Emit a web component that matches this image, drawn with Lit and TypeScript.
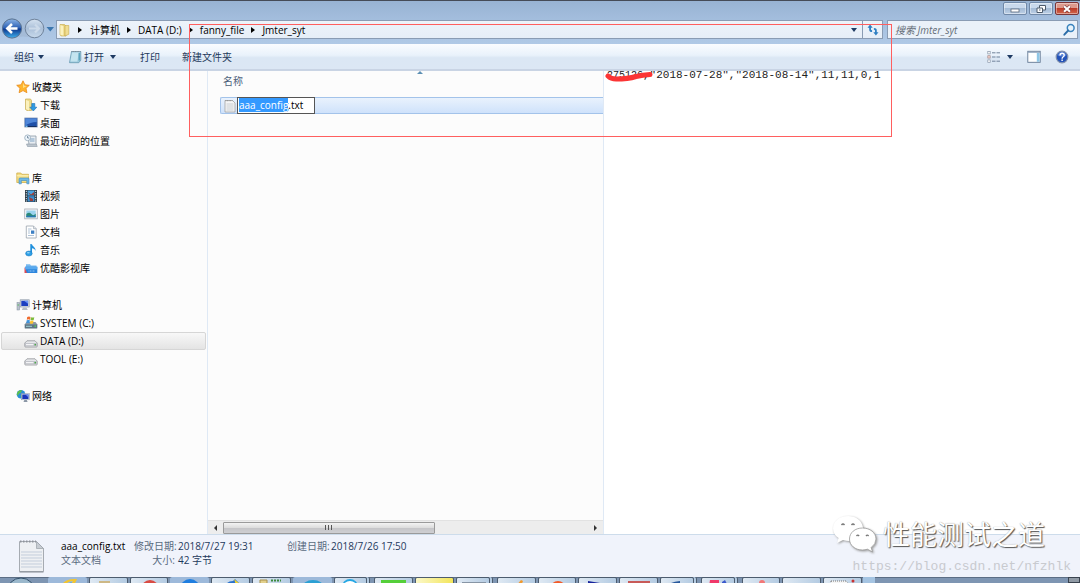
import { LitElement, html, css, svg, nothing } from "lit";
import { customElement, query } from "lit/decorators.js";
import { classMap } from "lit/directives/class-map.js";

const glyphs: Record<string, unknown> = {
  star: svg`<path d="M7 .8l1.9 4 4.4.5-3.3 3 .9 4.4L7 10.6l-3.900 2.100.900-4.400-3.300-3 4.400-.5z" fill="#ffb52e" stroke="#e88a1a" stroke-width=".8"/><path d="M7 2.800l1.200 2.900 2.600.3L7 8z" fill="#ffe08a"/>`,
  download: svg`<path d="M1.500 1h5l1 1.500v10H3l-1.500-1z" fill="#ecd98a" stroke="#c9ae55" stroke-width=".7"/><path d="M2 2l3 1.300v9.200L2 11z" fill="#fbf1bd"/><path d="M7.800 5.500h3v3.700h2L9.300 13 5.800 9.200h2z" fill="#2f9be4" stroke="#1b6fb5" stroke-width=".6"/>`,
  desktop: svg`<rect x=".8" y="2" width="12.400" height="9" fill="#1f50a8" stroke="#7f93b5" stroke-width=".8"/><path d="M1.300 2.500h11.400v3.500C8 6 5 7.500 1.300 9.500z" fill="#4f86d8"/><path d="M1.300 10.500h11.400" stroke="#16305f"/><rect x="1.500" y="9.600" width="2" height="1.300" fill="#7fd0ff"/>`,
  recent: svg`<path d="M4 2h8v8.500H5z" fill="#e8edf2" stroke="#8c99a6" stroke-width=".8"/><path d="M6 5h4.500M6 7h4.500" stroke="#7fa3c4"/><path d="M2.500 10h9.800l.9 2.500H3.500z" fill="#bcc5cd" stroke="#8c99a6" stroke-width=".6"/><circle cx="3.600" cy="3.800" r="2.900" fill="#eef6fc" stroke="#93a7b8" stroke-width=".8"/><path d="M3.600 2v2h1.500" stroke="#47647f" stroke-width=".7" fill="none"/>`,
  library: svg`<path d="M.8 2h4l1 1.300h6.700v8.200H.8z" fill="#f3dd83" stroke="#cfae4b" stroke-width=".8"/><path d="M.8 4.800h12" stroke="#fff4bd"/><path d="M3 12.800V8q0-1 1-1h8q1 0 1 1v4.800h-2.200V9.500H5.300v3.300z" fill="#6fb9e6" stroke="#3d88be" stroke-width=".6"/>`,
  video: svg`<rect x="1" y="1" width="12" height="12" fill="#2c3a44"/><rect x="3.600" y="1.500" width="6.800" height="5" fill="#4aa3df"/><rect x="3.600" y="7.200" width="6.800" height="5.300" fill="#3a8ed0"/><path d="M4 3l3 2.500L10 3v3H6zM5 8l4 2v2H6z" fill="#9b3f3a"/><path d="M2.300 1.800v11M11.700 1.800v11" stroke="#dfe8ee" stroke-dasharray="1.200 1.200"/>`,
  picture: svg`<rect x=".7" y="2" width="12.600" height="9.800" fill="#f5f6f8" stroke="#a7adb5" stroke-width=".8"/><rect x="2.300" y="3.500" width="9.400" height="6.700" fill="#9bd3ee"/><path d="M2.300 7q3-2.500 5 0t4.400-.5v3.700H2.300z" fill="#2c8a78"/><path d="M2.300 8.800h9.400v1.400H2.300z" fill="#2777b5"/>`,
  document: svg`<path d="M2.300 1h7.200l2.700 2.700V13H2.300z" fill="#fff" stroke="#9aa3ad" stroke-width=".8"/><path d="M9.500 1v2.700h2.700" fill="#dde3e9" stroke="#9aa3ad" stroke-width=".6"/><path d="M4 4h3.500M4 6h2M4 8h2M4 10.500h6" stroke="#9bb3cb" stroke-width=".8"/><rect x="7" y="5.500" width="3.300" height="3.300" fill="#3c7fc4"/>`,
  music: svg`<path d="M6.300 10.500V1l1.700.2c.4 2.300 3.800 2.800 3.600 6.800-.7-2-2-2.500-3.600-2.700v5.400z" fill="#1f8fdc"/><ellipse cx="4.900" cy="10.500" rx="3.300" ry="2.500" fill="#2c9fe6" stroke="#1673b8" stroke-width=".5"/><ellipse cx="4.300" cy="9.800" rx="1.500" ry=".8" fill="#93d4f8"/>`,
  youku: svg`<path d="M2 3.200h4l1 1.200h5.500v3H2z" fill="#78b9ee"/><path d="M1 5.800h12.300V12H2z" fill="#2d86dd"/><path d="M1 5.800h12.300v2.500H1z" fill="#58a9ef"/><path d="M.5 6v6H3z" fill="#d84a56"/><path d="M4.500 10h6.500" stroke="#a9d4fa" stroke-width=".8" stroke-dasharray="1 .5"/>`,
  computer: svg`<rect x="1" y="4.500" width="2.600" height="7.500" fill="#b9c2cc" stroke="#8290a0" stroke-width=".5"/><path d="M1.600 7h1.300" stroke="#49b84c"/><rect x="4.200" y="1.800" width="9" height="7.200" fill="#dce2e8" stroke="#8c98a6" stroke-width=".7"/><rect x="5.300" y="2.800" width="6.800" height="5.200" fill="#1c3fc0"/><path d="M8 2.800h4.100v3z" fill="#6a94f5"/><path d="M7 9.500h3.500l1.300 2.500H5.800z" fill="#b6bec7"/>`,
  system: svg`<path d="M.8 8.300L2.500 6h9l1.700 2.300V12H.8z" fill="#8b99a5"/><path d="M.8 8.500h12.400V12.500H.8z" fill="#5d7483"/><path d="M2 10.300h6" stroke="#9fd0d6"/><rect x="10.500" y="9.500" width="1.500" height="1.300" fill="#58e04e"/><path d="M3.200 1q1.800-1 3.300 0L6 3.700q-1.600-.8-3.200 0z" fill="#ef6a2d"/><path d="M7 1.200q1.700.8 3.300 0L9.700 4q-1.600.8-3.200 0z" fill="#7dbb3a"/><path d="M2.700 4.300q1.600-.8 3.200 0l-.5 3q-1.500-.8-3.200 0z" fill="#3f94dc"/><path d="M6.400 4.600q1.600.8 3.200 0L9 7.500q-1.600.7-3.100 0z" fill="#fdc22f"/>`,
  drive: svg`<path d="M.8 9L3 6.800h8L13.200 9v3.300q0 .7-.8.7H1.600q-.8 0-.8-.7z" fill="#e6e7ea" stroke="#85888e" stroke-width=".7"/><path d="M1.200 9.200h11.600V12H1.200z" fill="#b9bcc3"/><path d="M2 10h7.500v1.300H2z" fill="#f3f3f5"/><rect x="10.600" y="9.900" width="1.300" height="1.500" fill="#3fa83a"/>`,
  network: svg`<circle cx="5" cy="5.200" r="4.300" fill="#2a8fd6"/><path d="M2 2.300q2-1.600 4-1L5 3.500 3 4.800 1.500 7Q.3 4.500 2 2.300zM5 6l2.500-1 .5 2.500L5 9z" fill="#5fc04c"/><rect x="5.500" y="4.700" width="7.800" height="6.100" fill="#dbe2ea" stroke="#8794a5" stroke-width=".5"/><rect x="6.300" y="5.500" width="6.200" height="4.500" fill="#1b35b9"/><path d="M9.500 5.500h3v3z" fill="#6c8ff0"/><path d="M8.300 11h2.500l.8 2H7.500z" fill="#8b97a6"/>`,
  folder: svg`<path d="M2 1.500h4.500L8 3v10H3.500L2 12z" fill="#e6cf76" stroke="#c8aa4c" stroke-width=".6"/><path d="M7 2.500h3.800v8.800L7 13z" fill="#f0dd92" stroke="#c8aa4c" stroke-width=".6"/><path d="M2.300 2l3.200 1v9.800l-3.200-1z" fill="#fbf2bf"/>`,
  notepad: svg`<path d="M3.500 1.500h9.300v8.700l-2 2.500H1.500z" fill="#9cc9dc" stroke="#5f93ac" stroke-width=".7"/><path d="M4 2.500h6.800l-1.500 9H2.400z" fill="#c4e4ef"/><path d="M3.500 1.500h9" stroke="#7d8790" stroke-dasharray="1 .7"/><path d="M11.200 3v7.500" stroke="#3c93ae"/>`,
  text: svg`<path d="M2 1.500h7.500L12 4v9H2z" fill="#f5f5f5" stroke="#a2a2a2" stroke-width=".8"/><path d="M3.500 5h7M3.500 7h7M3.500 9h7M3.500 11h7" stroke="#bfc5ca" stroke-width=".8"/><path d="M2.500 1.700h7" stroke="#888" stroke-dasharray=".8 .8"/>`,
  views: svg`<rect x=".8" y="1.500" width="2.400" height="2.400" fill="#fff" stroke="#8996a8" stroke-width=".7"/><rect x=".8" y="5.700" width="2.400" height="2.400" fill="#f3d0c8" stroke="#a58e90" stroke-width=".7"/><rect x=".8" y="9.900" width="2.400" height="2.400" fill="#fff" stroke="#8996a8" stroke-width=".7"/><path d="M5 2.800h3.500M9.500 2.800H13M5 7h3.500M9.500 7H13M5 11.200h3.500M9.500 11.200H13" stroke="#71839b" stroke-width="1"/>`,
  pane: svg`<rect x=".8" y="1.300" width="12.400" height="11" fill="#fff" stroke="#617793" stroke-width=".9"/><path d="M1 2.300h12" stroke="#8fa4bd"/><rect x="9.800" y="3" width="2.800" height="8.800" fill="#8fc6e6"/>`,
  help: svg`<circle cx="7" cy="7" r="5.800" fill="#2453b8" stroke="#8090ad" stroke-width="1.200"/><path d="M2.500 5.500a4.700 4.700 0 019 0q-4.500 2-9 0z" fill="#6d97e4" opacity=".7"/><path d="M5 5.500q0-2.200 2.100-2.200T9.200 5.200Q9.200 6.300 8 7 7.100 7.500 7.100 8.700M7.100 9.600v1.500" stroke="#fff" stroke-width="1.400" fill="none"/>`,
  search: svg`<circle cx="8.700" cy="5" r="3.400" fill="#e7f3fb" stroke="#3a83bd" stroke-width="1.500"/><path d="M6.200 7.500L2.300 11.700" stroke="#2c6da8" stroke-width="1.900" stroke-linecap="round"/>`,
  refresh: svg`<path d="M1.500 4.800h5.200L4.100 1.500zM7.300 9.200h5.200L9.900 12.500z" fill="#2f7fc2"/><path d="M4.100 4v2.500q0 1.700 2 1.700M9.900 10V7.500q0-1.700-2-1.700" stroke="#2f7fc2" stroke-width="1.800" fill="none"/>`,
};

const icon = (name: string) =>
  html`<svg class="icon" viewBox="0 0 14 14" aria-hidden="true">${glyphs[name]}</svg>`;

const sections = [
  { head: ["star", "收藏夹"], items: [["download", "下载"], ["desktop", "桌面"], ["recent", "最近访问的位置"]] },
  { head: ["library", "库"], items: [["video", "视频"], ["picture", "图片"], ["document", "文档"], ["music", "音乐"], ["youku", "优酷影视库"]] },
  { head: ["computer", "计算机"], items: [["system", "SYSTEM (C:)"], ["drive", "DATA (D:)"], ["drive", "TOOL (E:)"]] },
  { head: ["network", "网络"], items: [] },
];

const tasks: { kind: string; art: unknown }[] = [
  { kind: "bare", art: svg`<path d="M12 8q4-8 16-7-1 3-4 7h-4q3-3 4-5-6 0-8 5z" fill="#f2c531"/><path d="M18 8q2-4 5-4l-2 4z" fill="#5ba5df"/>` },
  { kind: "", art: svg`<path d="M9 3h11v5H9z" fill="#cdb886"/>` },
  { kind: "", art: svg`<circle cx="19" cy="11" r="9" fill="#d94b43"/>` },
  { kind: "bare", art: svg`<circle cx="19" cy="11" r="10" fill="#1f7ee0"/>` },
  { kind: "", art: svg`<path d="M13 8q2-5 8-5l2-2 4 4v3z" fill="#2c72cc"/><path d="M22 1l6 5-4 1z" fill="#f3d32f"/>` },
  { kind: "", art: svg`<path d="M7 2h7v6H7z" fill="#e2d08c" stroke="#a8904c"/><path d="M18 2.500h10" stroke="#3c8a3c" stroke-width="2" stroke-dasharray="2 1"/>` },
  { kind: "bare", art: svg`<ellipse cx="19" cy="10" rx="11" ry="8" fill="#2ba0d4"/>` },
  { kind: "stack", art: svg`<circle cx="15" cy="9" r="8" fill="#25a7e4"/><path d="M10 6q5-4 10 0" stroke="#fff" stroke-width="2" fill="none"/>` },
  { kind: "", art: svg`<path d="M6 2h25v6H6z" fill="#55cf3a"/>` },
  { kind: "yellow", art: nothing },
  { kind: "stack", art: svg`<path d="M5 4h24v4H5z" fill="#8795a5"/>` },
  { kind: "", art: svg`<path d="M18 8l5-6 2 1-2 5z" fill="#f29a2d"/>` },
  { kind: "", art: svg`<circle cx="19" cy="11" r="8" fill="#f25a28"/>` },
  { kind: "", art: svg`<path d="M9 3l12 2 5 3H9z" fill="#17249c"/>` },
  { kind: "", art: svg`<path d="M8 3h22v5H8z" fill="#c85a58"/>` },
  { kind: "stack", art: svg`<path d="M6 8q3-4 13-5v5z" fill="#29599c"/>` },
  { kind: "stack", art: svg`<path d="M8 2h9v6H7z" fill="#f0386a"/><path d="M20 4l3-2 3 6h-6z" fill="#3b59cc"/>` },
  { kind: "", art: svg`<circle cx="19" cy="5" r="3" fill="#f27777"/>` },
  { kind: "", art: svg`<path d="M7 5h22v3H7z" fill="#93a9c0"/>` },
  { kind: "", art: svg`<path d="M7 3h15l5 5H7z" fill="#f5f5f5" stroke="#777" stroke-dasharray="1 1"/><circle cx="29" cy="3" r="1.500" fill="#c83232"/>` },
];

@customElement("app-root")
export class AppRoot extends LitElement {
  static styles = css`
    :host {
      display: flex;
      flex-direction: column;
      position: relative;
      height: 100vh;
      overflow: hidden;
      background: #b9d0ea;
      color: #000;
      font: 10px/14px "Open Sans", "Noto Sans CJK SC", sans-serif;
    }
    * { box-sizing: border-box; }
    button, input { font: inherit; color: inherit; margin: 0; padding: 0; border: 0; background: none; }
    button { display: flex; align-items: center; white-space: nowrap; }
    a { color: inherit; text-decoration: none; }
    ul { list-style: none; margin: 0; padding: 0; }
    .icon { width: 14px; height: 14px; flex: none; display: block; }

    .frame {
      flex: none;
      border-top: 1px solid #454b57;
      background: linear-gradient(#98b3d3, #a9c3e2 40%, #bdd3ed);
    }
    .caption { display: flex; justify-content: flex-end; gap: 2px; padding: 1px 1px 0; height: 19px; }
    .win {
      width: 24px;
      height: 13px;
      justify-content: center;
      border: 1px solid #7088a7;
      border-radius: 2px;
      background: linear-gradient(#c9d9ec 45%, #a4bbd6 50%, #bdd0e6);
      box-shadow: inset 0 0 0 1px #ffffff66;
    }
    .win.close { background: linear-gradient(#dd9a8d 45%, #bd3c28 50%, #d0674f); border-color: #7b3538; }
    .win svg { width: 12px; height: 10px; }

    .address { display: flex; align-items: center; height: 20px; padding: 0 2px 1px 2px; }
    .travel { display: flex; align-items: center; width: 54px; }
    .travel svg { width: 52px; height: 21px; flex: none; }
    .travel button { display: block; }
    .path {
      flex: 1;
      display: flex;
      align-items: center;
      min-width: 0;
      height: 19px;
      border: 1px solid #8a9cb4;
      background: linear-gradient(#edf3fa, #e6eef8);
    }
    .path .icon { margin: 0 6px 0 1px; }
    .crumbs { display: flex; flex: 1; align-items: center; }
    .crumbs li { display: flex; align-items: center; }
    .crumbs li::before {
      content: "";
      border: 3px solid transparent;
      border-left: 4px solid #000;
      border-right: 0;
      margin-right: 8px;
    }
    .crumbs li + li::before { margin-left: 7px; margin-right: 7px; }
    .down { border: 3px solid transparent; border-top: 4px solid #1e3a62; border-bottom: 0; flex: none; }
    .path .drop { padding: 0 5px; height: 100%; }
    .path .go { width: 20px; height: 100%; border-left: 1px solid #8a9cb4; justify-content: center; }
    .path .go .icon { margin: 0; }
    .search {
      display: flex;
      align-items: center;
      width: 191px;
      height: 19px;
      margin-left: 4px;
      padding: 0 1px 0 7px;
      border: 1px solid #8a9cb4;
      background: #eaf1f9;
    }
    .search input { flex: 1; min-width: 0; outline: none; }
    .search input::placeholder { color: #666e78; font-style: italic; opacity: 1; }

    .tools {
      flex: none;
      display: flex;
      align-items: center;
      height: 27px;
      margin-top: 4px;
      padding: 0 11px 0 14px;
      color: #1e395b;
      background: linear-gradient(#fafcff, #e9f2fb 45%, #dbe7f4 55%, #dce7f4);
      border-bottom: 2px solid #c9d4e4;
    }
    .organize, .open { margin-right: 24px; }
    .organize .down { margin-left: 4px; }
    .open .icon { margin-right: 2px; }
    .open .down { margin-left: 6px; }
    .print { margin-right: 22px; }
    .right { display: flex; align-items: center; gap: 14px; margin-left: auto; }
    .right .down { margin-left: 6px; }

    .main {
      flex: 1;
      min-height: 0;
      display: grid;
      grid-template-columns: 208px minmax(0, 396fr) minmax(0, 476fr);
      background: #fcfcfc;
    }
    .nav { padding: 7px 1px 0; border-right: 1px solid #dfe9f5; overflow: hidden; }
    .section { margin-bottom: 19px; }
    .entry {
      display: flex;
      align-items: center;
      gap: 2px;
      height: 18px;
      padding-left: 22px;
      border: 1px solid transparent;
      border-radius: 2px;
      white-space: nowrap;
    }
    .entry.head { padding-left: 14px; }
    .entry.selected { border-color: #d6d6d6; background: linear-gradient(#f8f8f8, #e4e4e4); }

    .list { display: flex; flex-direction: column; min-width: 0; border-right: 1px solid #dfe9f5; }
    .column { position: relative; height: 26px; padding: 3px 0 0 15px; color: #4c607a; }
    .column button { height: 14px; }
    .sort {
      position: absolute;
      top: 0;
      left: 53%;
      border: 3px solid transparent;
      border-bottom: 3px solid #5c8fb3;
      border-top: 0;
    }
    .file {
      display: flex;
      align-items: center;
      height: 17px;
      margin-left: 12px;
      padding-left: 2px;
      border: 1px solid #a3c3ea;
      border-right: 0;
      border-radius: 2px 0 0 2px;
      background: linear-gradient(#e9f2fd, #cfe2fb);
    }
    .rename {
      width: 78px;
      height: 17px;
      padding: 0 0 1px 1px;
      border: 1px solid #555;
      border-radius: 0;
      background: #fff;
      outline: none;
    }
    .rename::selection { background: #3399ff; color: #fff; }
    .scroll {
      display: flex;
      align-items: center;
      height: 14px;
      margin-top: auto;
      border-top: 1px solid #e2e2e2;
      background: #ededed;
    }
    .scroll button { width: 15px; height: 13px; justify-content: center; flex: none; }
    .scroll .arrow { border: 3px solid transparent; border-right: 3px solid #333; border-left: 0; }
    .scroll .arrow.next { border-right: 0; border-left: 3px solid #333; }
    .track { flex: 1; height: 12px; }
    .thumb {
      width: 58%;
      height: 12px;
      display: flex;
      justify-content: center;
      align-items: center;
      gap: 2px;
      border: 1px solid #9a9a9a;
      border-radius: 1px;
      background: linear-gradient(#f3f3f3, #dedede 45%, #c6c6c9 55%, #cfcfd2);
    }
    .thumb i { width: 1px; height: 5px; background: #555; }

    .preview {
      position: relative;
      min-width: 0;
      overflow: hidden;
      padding-left: 3px;
      background: #fff;
      color: #222;
      font: 11px/8px "Liberation Mono", monospace;
      white-space: nowrap;
    }
    .masked { font-size: 10px; }
    .scribble { position: absolute; left: 1px; top: 0; width: 50px; height: 12px; }

    .details {
      flex: none;
      display: flex;
      height: 43px;
      padding: 4px 17px 0;
      border-top: 1px solid #cddceb;
      background: #f0f3fb;
      color: #5a6b80;
    }
    .details svg { width: 30px; height: 34px; margin-right: 14px; flex: none; }
    .names { width: 73px; white-space: nowrap; }
    .title { color: #000; }
    .facts { display: grid; grid-template-columns: 153px auto; grid-auto-rows: 14px; margin: 0; white-space: nowrap; }
    .pair { display: grid; grid-template-columns: 41px auto; justify-content: start; column-gap: 3px; }
    .pair dt { text-align: right; }
    .pair dd { margin: 0; color: #1e395b; }

    .taskbar {
      flex: none;
      display: flex;
      height: 6px;
      overflow: hidden;
      background: linear-gradient(#5c6e85 1px, #7e95b2 1px);
    }
    .start { width: 47px; flex: none; }
    .start svg { width: 47px; height: 6px; display: block; }
    .apps { flex: 816 0 0; display: grid; grid-template-columns: repeat(20, minmax(0, 1fr)); }
    .apps button {
      display: block;
      height: 10px;
      margin: 0 1px;
      border: 1px solid #4d5c6e;
      border-radius: 2px;
      background: linear-gradient(90deg, #dfe9f3, #b4cbe2);
      overflow: hidden;
    }
    .apps button.bare { border-color: transparent; background: #9db9da; }
    .apps button.stack { margin-right: 6px; box-shadow: 2px 0 #b4cbe2, 3px 0 #4d5c6e; }
    .apps button.yellow { background: linear-gradient(90deg, #fbf8c8, #f3e55b); }
    .apps svg { display: block; width: 38px; height: 8px; }
    .tray { flex: 205 0 0; display: flex; justify-content: space-between; height: 6px; overflow: hidden; }
    .more { width: 12px; height: 6px; background: #a5c4e2; }
    .clock { padding: 3px 16px 0 0; color: #fff; }
    .show { width: 12px; height: 6px; flex: none; border: 1px solid #39434f; background: #909aa5; }

    .mark { position: absolute; left: 189px; top: 24px; width: 703px; height: 113px; border: 1px solid #ff5f5f; pointer-events: none; }
    .brand {
      position: absolute;
      right: 35px;
      bottom: 28px;
      display: flex;
      align-items: center;
      gap: 5px;
      color: #fff;
      font-size: 27px;
      line-height: 40px;
      text-shadow: 1px 1px 1px #555, 0 0 1px #999;
      white-space: nowrap;
    }
    .brand svg { width: 46px; height: 40px; filter: drop-shadow(1px 1px 1px #999); }
    .source { position: absolute; right: 9px; bottom: 8px; color: #c8cacf; font: 13px/16px "Liberation Mono", monospace; }
  `;

  @query(".rename") private rename!: HTMLInputElement;

  firstUpdated() {
    this.rename.focus();
    this.rename.setSelectionRange(0, this.rename.value.lastIndexOf("."));
  }

  private renderFrame() {
    return html`
      <header class="frame">
        <div class="caption">
          <button class="win" aria-label="最小化"><svg viewBox="0 0 12 10"><rect x="2" y="5" width="8" height="3" fill="#fff" stroke="#5a687a" stroke-width=".8"/></svg></button>
          <button class="win" aria-label="还原"><svg viewBox="0 0 12 10"><path d="M4.500 1.500h6v4.500h-6z" fill="#fff" stroke="#4d5a6b"/><path d="M2 4h5.500v4.500H2z" fill="#fff" stroke="#4d5a6b"/><path d="M4 6h1.500" stroke="#4d5a6b"/></svg></button>
          <button class="win close" aria-label="关闭"><svg viewBox="0 0 12 10"><path d="M3 2.200l6 5.600M9 2.200L3 7.800" stroke="#7b3538" stroke-width="3.200"/><path d="M3 2.200l6 5.600M9 2.200L3 7.800" stroke="#fff" stroke-width="2"/></svg></button>
        </div>
        <div class="address">
          <div class="travel">
            <button aria-label="后退和前进">
              <svg viewBox="0 0 52 21">
                <defs>
                  <linearGradient id="b" x2="0" y2="1"><stop stop-color="#8bb4e6"/><stop offset=".48" stop-color="#2a5fb4"/><stop offset=".52" stop-color="#0c358c"/><stop offset="1" stop-color="#3fb1ee"/></linearGradient>
                  <linearGradient id="f" x2="0" y2="1"><stop stop-color="#d6e3f1"/><stop offset=".5" stop-color="#aabfd8"/><stop offset="1" stop-color="#c8daec"/></linearGradient>
                </defs>
                <path d="M10 1q11 3 22 0v19q-11-3-22 0z" fill="#a4bbd7"/>
                <circle cx="10" cy="10.500" r="9.600" fill="url(#b)" stroke="#59718f"/>
                <path d="M15.500 10.500H6M10 6l-4.700 4.500L10 15" stroke="#fff" stroke-width="2.500" fill="none"/>
                <circle cx="32.500" cy="10.500" r="9.300" fill="url(#f)" stroke="#71849c"/>
                <path d="M27 10.500h10M33 6.500l4 4-4 4" stroke="#ccdaea" stroke-width="2.200" fill="none"/>
                <path d="M44.500 9h7.500l-3.700 4.500z" fill="#3b76ae"/>
              </svg>
            </button>
          </div>
          <nav class="path" aria-label="地址">
            ${icon("folder")}
            <ul class="crumbs">
              ${["计算机", "DATA (D:)", "fanny_file", "Jmter_syt"].map((c) => html`<li><a href="#">${c}</a></li>`)}
            </ul>
            <button class="drop" aria-label="历史"><span class="down"></span></button>
            <button class="go" aria-label="刷新">${icon("refresh")}</button>
          </nav>
          <label class="search"><input type="text" aria-label="搜索" placeholder="搜索 Jmter_syt" />${icon("search")}</label>
        </div>
        <div class="tools" role="toolbar">
          <button class="organize">组织<span class="down"></span></button>
          <button class="open">${icon("notepad")}打开<span class="down"></span></button>
          <button class="print">打印</button>
          <button>新建文件夹</button>
          <div class="right">
            <button aria-label="视图">${icon("views")}<span class="down"></span></button>
            <button aria-label="预览窗格">${icon("pane")}</button>
            <button aria-label="帮助">${icon("help")}</button>
          </div>
        </div>
      </header>`;
  }

  render() {
    return html`
      ${this.renderFrame()}
      <main class="main">
        <nav class="nav">
          ${sections.map(({ head, items }) => html`
            <div class="section">
              <a class="entry head" href="#">${icon(head[0])}${head[1]}</a>
              ${items.map(([name, label]) => html`
                <a href="#" class=${classMap({ entry: true, selected: label === "DATA (D:)" })}>${icon(name)}${label}</a>`)}
            </div>`)}
        </nav>
        <section class="list">
          <div class="column"><button>名称</button><span class="sort"></span></div>
          <div class="file">${icon("text")}<input class="rename" aria-label="文件名" spellcheck="false" .value=${"aaa_config.txt"} /></div>
          <div class="scroll">
            <button aria-label="向左"><span class="arrow"></span></button>
            <div class="track"><div class="thumb"><i></i><i></i><i></i></div></div>
            <button aria-label="向右"><span class="arrow next"></span></button>
          </div>
        </section>
        <section class="preview">
          <span class="masked">275126</span>,"2018-07-28","2018-08-14",11,11,0,1
          <svg class="scribble" viewBox="0 0 50 12"><path d="M3 5q3 3 8 3 12 0 20-2.500Q38 4 45 3.500" stroke="#fb3535" stroke-width="5" stroke-linecap="round" stroke-linejoin="round" fill="none"/></svg>
        </section>
      </main>
      <footer class="details">
        <svg viewBox="0 0 30 34"><path d="M2.500 2.500h17l7 7v23h-24z" fill="#eef0f3" stroke="#a6abb2"/><path d="M19.500 2.500v7h7z" fill="#c7ccd2" stroke="#9aa0a8" stroke-width=".7"/><path d="M4 13h21M4 16h21M4 19h21M4 22h21M4 25h21M4 28h21" stroke="#c3cddb"/><path d="M3 2.500h16" stroke="#8f949b" stroke-width="2" stroke-dasharray="1.500 1.500"/><path d="M2.500 33h24" stroke="#878d96"/></svg>
        <div class="names"><div class="title">aaa_config.txt</div><div>文本文档</div></div>
        <dl class="facts">
          <div class="pair"><dt>修改日期:</dt><dd>2018/7/27 19:31</dd></div>
          <div class="pair"><dt>创建日期:</dt><dd>2018/7/26 17:50</dd></div>
          <div class="pair"><dt>大小:</dt><dd>42 字节</dd></div>
        </dl>
      </footer>
      <div class="taskbar">
        <button class="start" aria-label="开始"><svg viewBox="0 0 47 6"><circle cx="21" cy="15" r="14" fill="#9bb8cc" stroke="#34506b"/></svg></button>
        <div class="apps">
          ${tasks.map((t) => html`<button class=${t.kind} aria-label="任务"><svg viewBox="0 0 38 8">${t.art}</svg></button>`)}
        </div>
        <div class="tray">
          <button class="more" aria-label="显示隐藏的图标"></button>
          <div class="clock">18:38</div>
        </div>
        <button class="show" aria-label="显示桌面"></button>
      </div>
      <div class="mark"></div>
      <div class="brand">
        <svg viewBox="0 0 46 40">
          <path d="M16 1C7.500 1 1 6.500 1 13.500c0 4 2.200 7.300 5.600 9.600L5 28l6-3q7 2 13-.5 8-4 7-12C30 5.500 24 1 16 1z" fill="#fff"/>
          <path d="M30.500 13C23 13 17.500 17.700 17.500 24S23 35 30.500 35q2.500 0 5-.8l5 2.800-1.300-4.500Q44 29 44 24c0-6.300-6-11-13.500-11z" fill="#fff" stroke="#999" stroke-width=".8"/>
          <path d="M9.500 10q1.500-2 3 0M19.500 10q1.500-2 3 0M24.500 21q1.300-1.800 2.600 0M34 21q1.300-1.800 2.600 0" stroke="#777" stroke-width="1.300" fill="none"/>
        </svg>
        <span>性能测试之道</span>
      </div>
      <div class="source">https://blog.csdn.net/nfzhlk</div>
    `;
  }
}
